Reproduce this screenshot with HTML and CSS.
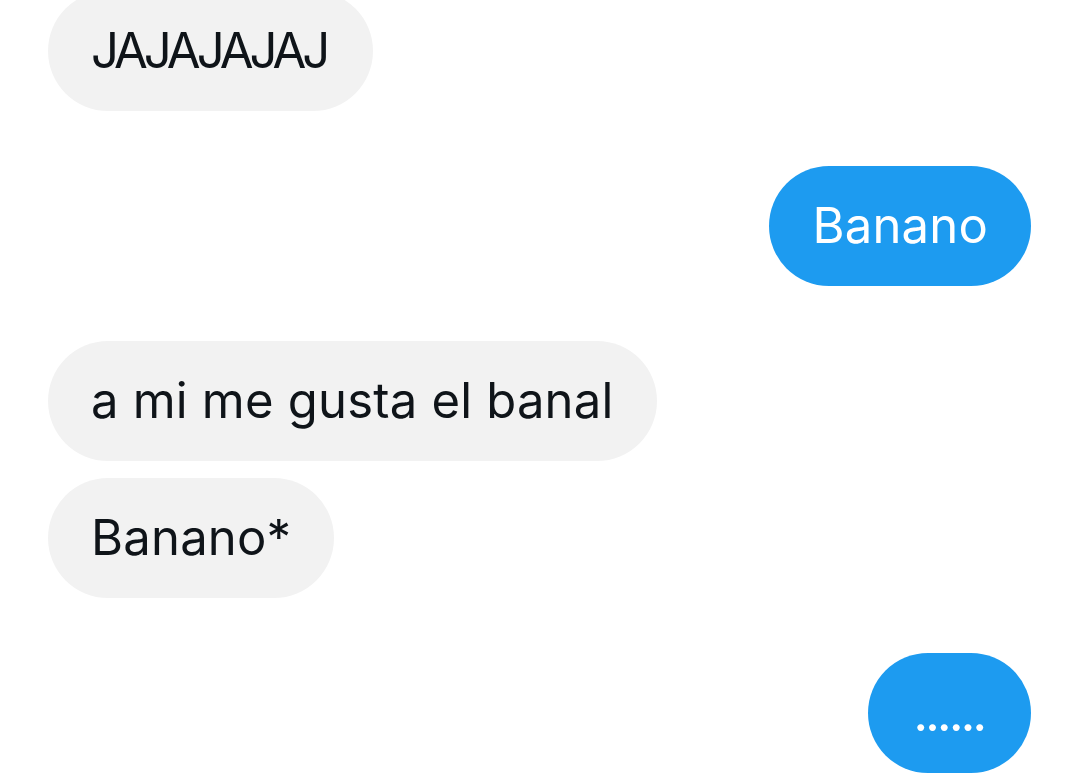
FILE: index.html
```html
<!DOCTYPE html>
<html lang="es">
<head>
<meta charset="utf-8">
<link rel="stylesheet" href="styles.css">
</head>
<body>
<div class="chat">
  <div class="group in first">
    <div class="bubble in-bubble caps">JAJAJAJAJ</div>
  </div>
  <div class="group out">
    <div class="bubble out-bubble">Banano</div>
  </div>
  <div class="group in">
    <div class="bubble in-bubble">a mi me gusta el banal</div>
    <div class="bubble in-bubble">Banano*</div>
  </div>
  <div class="group out">
    <div class="bubble out-bubble dots">......</div>
  </div>
</div>
</body>
</html>
```
FILE: styles.css
```css
html, body {
  margin: 0;
  padding: 0;
  background: #ffffff;
}
body {
  font-family: Inter, "Noto Sans", "Liberation Sans", sans-serif;
  overflow: hidden;
}
.chat {
  display: flex;
  flex-direction: column;
  gap: 55px;
  padding: 0 49px 0 48px;
}
.group {
  display: flex;
  flex-direction: column;
  gap: 17px;
}
.group.first {
  margin-top: -9px;
}
.group.in {
  align-items: flex-start;
}
.group.out {
  align-items: flex-end;
}
.bubble {
  box-sizing: border-box;
  height: 120px;
  padding: 0 43px;
  border-radius: 60px;
  font-size: 49px;
  line-height: 120px;
  white-space: nowrap;
  letter-spacing: 0.2px;
}
.caps {
  letter-spacing: -4px;
  padding-right: 47px;
}
.in-bubble {
  background: #f2f2f2;
  color: #0f1419;
}
.out-bubble {
  background: #1d9bf0;
  color: #ffffff;
}
.dots {
  font-size: 52px;
  letter-spacing: -3.2px;
  padding: 0 47px 0 45px;
}
```
